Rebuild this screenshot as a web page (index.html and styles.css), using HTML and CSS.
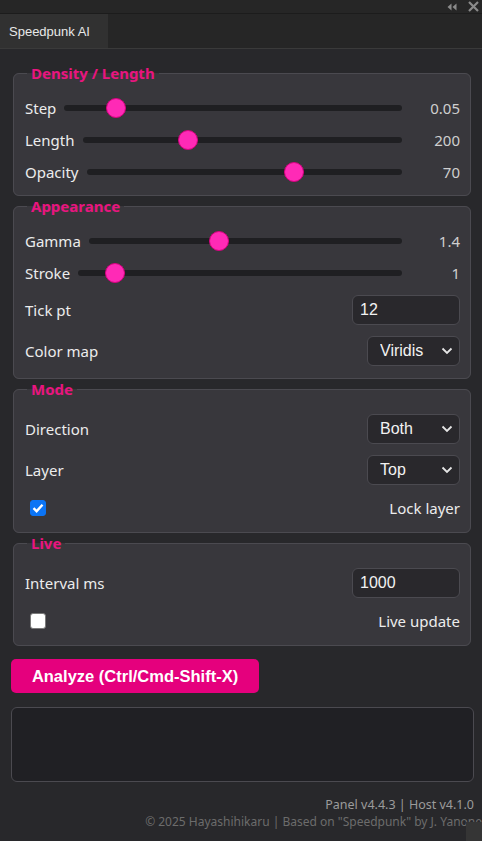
FILE: index.html
```html
<!DOCTYPE html>
<html>
<head>
<meta charset="utf-8">
<link rel="stylesheet" href="styles.css">
</head>
<body>
<div class="topbar">
  <svg class="tb-icon" width="10" height="8" viewBox="0 0 10 8"><path d="M4.5 0.5L0.5 4L4.5 7.5Z M9.5 0.5L5.5 4L9.5 7.5Z" fill="#8a8a8a"/></svg>
  <svg class="tb-icon" width="11" height="11" viewBox="0 0 11 11"><path d="M1 1L10 10M10 1L1 10" stroke="#8a8a8a" stroke-width="2.2"/></svg>
</div>
<div class="tabbar">
  <div class="tab">Speedpunk AI</div>
</div>
<main class="panel">
  <fieldset class="group">
    <legend>Density / Length</legend>
    <div class="row slider-row">
      <label>Step</label>
      <input type="range" min="0" max="100" value="13">
      <span class="val">0.05</span>
    </div>
    <div class="row slider-row">
      <label>Length</label>
      <input type="range" min="0" max="100" value="32">
      <span class="val">200</span>
    </div>
    <div class="row slider-row">
      <label>Opacity</label>
      <input type="range" min="0" max="100" value="67">
      <span class="val">70</span>
    </div>
  </fieldset>

  <fieldset class="group">
    <legend>Appearance</legend>
    <div class="row slider-row">
      <label>Gamma</label>
      <input type="range" min="0" max="100" value="41">
      <span class="val">1.4</span>
    </div>
    <div class="row slider-row">
      <label>Stroke</label>
      <input type="range" min="0" max="100" value="9">
      <span class="val">1</span>
    </div>
    <div class="row ctrl-row">
      <label>Tick pt</label>
      <input class="num" type="text" value="12">
    </div>
    <div class="row ctrl-row">
      <label>Color map</label>
      <select class="sel"><option>Viridis</option></select>
    </div>
  </fieldset>

  <fieldset class="group">
    <legend>Mode</legend>
    <div class="row ctrl-row">
      <label>Direction</label>
      <select class="sel"><option>Both</option></select>
    </div>
    <div class="row ctrl-row">
      <label>Layer</label>
      <select class="sel"><option>Top</option></select>
    </div>
    <div class="row check-row">
      <span class="cb checked"><svg width="12" height="10" viewBox="0 0 12 10"><path d="M1.5 5.2L4.6 8.2L10.5 1.8" fill="none" stroke="#fff" stroke-width="2.4"/></svg></span>
      <label>Lock layer</label>
    </div>
  </fieldset>

  <fieldset class="group">
    <legend>Live</legend>
    <div class="row ctrl-row">
      <label>Interval ms</label>
      <input class="num" type="text" value="1000">
    </div>
    <div class="row check-row">
      <span class="cb"></span>
      <label>Live update</label>
    </div>
  </fieldset>

  <button class="analyze">Analyze (Ctrl/Cmd-Shift-X)</button>

  <div class="log"></div>

  <footer class="footer">
    <div class="ver">Panel v4.4.3 | Host v4.1.0</div>
    <div class="copy">© 2025 Hayashihikaru | Based on "Speedpunk" by J. Yanone</div>
  </footer>
</main>
<div class="corner"></div>
</body>
</html>
```

FILE: styles.css
```css
* { box-sizing: border-box; }
html, body {
  margin: 0;
  padding: 0;
  background: #28282b;
  overflow: hidden;
  width: 482px;
  height: 841px;
}
body {
  font-family: "Noto Sans", "Open Sans", sans-serif;
  color: #e6e6e6;
  position: relative;
}
.topbar {
  height: 14px;
  background: #262626;
  border-bottom: 1px solid #1c1c1c;
  display: flex;
  justify-content: flex-end;
  align-items: center;
  gap: 11px;
  padding-right: 3px;
}
.tabbar {
  height: 35px;
  background: #262626;
  border-bottom: 1px solid #3a3a3a;
  display: flex;
}
.tab {
  width: 108px;
  background: #313131;
  font-family: "Liberation Sans", sans-serif;
  font-size: 13px;
  color: #e8e8e8;
  display: flex;
  align-items: center;
  padding-left: 9px;
}
.panel {
  padding: 14px 8px 0 11px;
}
.group {
  margin: 0 3px 0 2px;
  padding: 0 10px 7px 11px;
  background: #38373c;
  border: 1px solid #4b4a50;
  border-radius: 6px;
  min-inline-size: 0;
}
.group legend {
  color: #e8157f;
  font-weight: 700;
  font-size: 15px;
  line-height: 20px;
  padding: 0 4px;
  margin-left: 2px;
  margin-bottom: 9px;
}
.row {
  display: flex;
  align-items: center;
}
.row label {
  font-size: 15px;
  color: #ececec;
  white-space: nowrap;
}
.slider-row {
  height: 32px;
  gap: 8px;
}
.slider-row input[type=range] {
  -webkit-appearance: none;
  appearance: none;
  flex: 1;
  min-width: 0;
  margin: 0;
  height: 22px;
  background: transparent;
}
.slider-row input[type=range]::-webkit-slider-runnable-track {
  height: 6px;
  background: #1f1f22;
  border-radius: 3px;
}
.slider-row input[type=range]::-webkit-slider-thumb {
  -webkit-appearance: none;
  width: 20px;
  height: 20px;
  margin-top: -7px;
  border-radius: 50%;
  background: #ff2ab6;
  border: 1px solid #d8007f;
}
.val {
  width: 50px;
  text-align: right;
  font-size: 15px;
  color: #cfcfcf;
}
.ctrl-row {
  height: 41px;
  justify-content: space-between;
}
.num {
  width: 108px;
  height: 30px;
  background: #29282c;
  border: 1px solid #4b4a50;
  border-radius: 6px;
  color: #f2f2f2;
  font-family: "Liberation Sans", Arial, sans-serif;
  font-size: 16px;
  padding: 0 7px;
  outline: none;
}
.sel {
  -webkit-appearance: none;
  appearance: none;
  width: 93px;
  height: 30px;
  background: #29282c url("data:image/svg+xml,%3Csvg xmlns='http://www.w3.org/2000/svg' width='12' height='8' viewBox='0 0 12 8'%3E%3Cpath d='M1.5 1.5L6 6L10.5 1.5' fill='none' stroke='%23e6e6e6' stroke-width='1.8'/%3E%3C/svg%3E") no-repeat right 6px center;
  border: 1px solid #4b4a50;
  border-radius: 6px;
  color: #f2f2f2;
  font-family: "Liberation Sans", Arial, sans-serif;
  font-size: 16px;
  padding: 0 0 0 12px;
  outline: none;
}
.check-row {
  height: 35px;
  justify-content: space-between;
  padding-left: 5px;
}
.cb {
  width: 16px;
  height: 16px;
  border-radius: 3px;
  background: #ffffff;
  border: 1px solid #7a7a7a;
  display: flex;
  align-items: center;
  justify-content: center;
}
.cb.checked {
  background: #0b74f5;
  border-color: #0b74f5;
}
.analyze {
  display: block;
  margin-top: 13px;
  width: 248px;
  height: 34px;
  background: #e5007d;
  color: #ffffff;
  border: none;
  border-radius: 5px;
  font-family: "Liberation Sans", Arial, sans-serif;
  font-weight: 700;
  font-size: 16.5px;
  padding: 0;
}
.log {
  margin-top: 14px;
  height: 75px;
  background: #202024;
  border: 1px solid #4b4a50;
  border-radius: 6px;
}
.footer {
  margin-top: 14px;
  display: flex;
  flex-direction: column;
  align-items: flex-end;
}
.ver {
  font-size: 12.5px;
  line-height: 18px;
  color: #9b9b9b;
}
.copy {
  font-size: 12px;
  line-height: 16px;
  color: #6c6c6c;
  white-space: nowrap;
  margin-right: -8px;
}
.corner {
  position: absolute;
  right: 0;
  bottom: 0;
  width: 16px;
  height: 19px;
  background: #353535;
}
```
